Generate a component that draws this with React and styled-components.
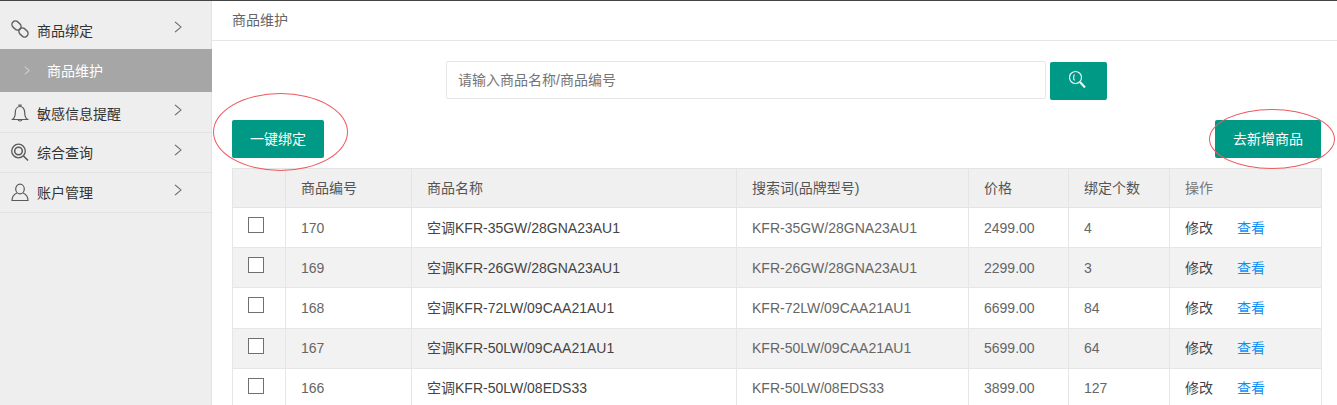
import React from "react";
import styled, { createGlobalStyle } from "styled-components";

const GlobalStyle = createGlobalStyle`
  html, body { margin: 0; padding: 0; height: 100%; overflow: hidden; background: #fff; }
  body { font-family: "Liberation Sans", "Noto Sans CJK SC", sans-serif; font-size: 14px; color: #333; }
  * { box-sizing: border-box; }
`;

const products = [
  { id: 170, name: "KFR-35GW/28GNA23AU1", price: "2499.00", count: 4 },
  { id: 169, name: "KFR-26GW/28GNA23AU1", price: "2299.00", count: 3 },
  { id: 168, name: "KFR-72LW/09CAA21AU1", price: "6699.00", count: 84 },
  { id: 167, name: "KFR-50LW/09CAA21AU1", price: "5699.00", count: 64 },
  { id: 166, name: "KFR-50LW/08EDS33", price: "3899.00", count: 127 },
];

const LinkIcon = () => (
  <svg width="20" height="20" viewBox="0 0 20 20" fill="none" stroke="#5a5a5a" strokeWidth="1.4">
    <rect x="0.500" y="3" width="10" height="7" rx="3.500" transform="rotate(45 5.500 6.500)" />
    <rect x="7.500" y="10" width="10" height="7" rx="3.500" transform="rotate(45 12.500 13.500)" />
  </svg>
);

const BellIcon = () => (
  <svg width="20" height="20" viewBox="0 0 20 20" fill="none" stroke="#5a5a5a" strokeWidth="1.2">
    <path d="M1.500 16.500c2-1.500 2.800-3 2.800-7 0-3.800 2.200-6 4.700-6s4.700 2.200 4.700 6c0 4 .8 5.500 2.800 7z" />
    <path d="M8 3.500V2h2v1.500" />
    <path d="M7 16.500c.3 2 3.700 2 4 0" />
  </svg>
);

const QueryIcon = () => (
  <svg width="20" height="20" viewBox="0 0 20 20" fill="none" stroke="#5a5a5a" strokeWidth="1.3">
    <circle cx="7.500" cy="8" r="6.800" />
    <circle cx="7.500" cy="8" r="3.800" strokeWidth="1.500" />
    <path d="M12.500 13l4.500 4.500" strokeWidth="1.600" />
  </svg>
);

const UserIcon = () => (
  <svg width="20" height="20" viewBox="0 0 20 20" fill="none" stroke="#5a5a5a" strokeWidth="1.2">
    <ellipse cx="9" cy="6" rx="4.300" ry="4.800" />
    <path d="M5.800 10C2.800 11.500 1 13.500 1 17.500h16c0-4-1.800-6-4.800-7.500" />
  </svg>
);

const SearchIcon = () => (
  <svg width="20" height="20" viewBox="0 0 20 20" fill="none" stroke="#e8f6f3" strokeWidth="1.2">
    <circle cx="6.500" cy="7.500" r="6" />
    <path d="M5.500 4.500C4.300 6 4.300 9 5.500 10.500" />
    <path d="M11 12l5 5.500" strokeWidth="2.200" />
  </svg>
);

const Chevron = ({ width = 8, height = 12, color = "#666" }) => (
  <svg width={width} height={height} viewBox="0 0 8 14" fill="none" stroke={color} strokeWidth="1.100" preserveAspectRatio="none">
    <path d="M1 1l6 6-6 6" />
  </svg>
);

const Page = styled.div`
  display: flex;
  height: 405px;
  overflow: hidden;
  border-top: 1px solid #444;
  position: relative;
`;

const Sidebar = styled.aside`
  width: 212px;
  flex: none;
  padding-top: 9px;
  background: #eee;
  border-right: 1px solid #e2e2e2;
`;

const MenuItem = styled.div`
  display: flex;
  align-items: center;
  height: ${(p) => p.$height || 40}px;
  padding: 0 29px 0 11px;
  border-bottom: 1px solid ${(p) => (p.$plain ? "transparent" : "#e3e3e3")};
  color: #333;
`;

const MenuIcon = styled.span`
  display: flex;
  width: 26px;
  flex: none;
`;

const MenuLabel = styled.span`
  flex: 1;
  line-height: 20px;
  padding-top: ${(p) => p.$drop}px;
`;

const MenuArrow = styled.span`
  display: flex;
  margin-bottom: 5px;
`;

const SubItem = styled.div`
  display: flex;
  align-items: center;
  gap: 17px;
  height: 43px;
  margin-right: -1px;
  padding: 0 0 0 24px;
  margin-bottom: 1px;
  line-height: 20px;
  background: #a6a6a6;
  color: #fff;
`;

const Main = styled.main`
  flex: 1;
  min-width: 0;
`;

const Crumb = styled.div`
  height: 40px;
  padding: 0 20px;
  line-height: 38px;
  color: #666;
  border-bottom: 1px solid #e6e6e6;
`;

const SearchRow = styled.div`
  display: flex;
  justify-content: center;
  gap: 4px;
  padding: 20px 230px 0 234px;
`;

const SearchInput = styled.input`
  flex: 1;
  height: 38px;
  padding: 0 11px;
  font: inherit;
  color: #333;
  background: #fff;
  border: 1px solid #e6e6e6;
  border-radius: 2px;
  outline: none;
  &::placeholder { color: #757575; opacity: 1; }
`;

const Button = styled.button`
  display: flex;
  align-items: center;
  justify-content: center;
  width: ${(p) => p.$width}px;
  height: 38px;
  padding: 0 0 2px;
  font: inherit;
  color: #fff;
  background: #009985;
  border: none;
  border-radius: 2px;
`;

const SearchButton = styled(Button)`
  margin-top: 1px;
`;

const ActionRow = styled.div`
  display: flex;
  justify-content: space-between;
  margin: 20px 16px 10px 20px;
`;

const Table = styled.table`
  width: 1089px;
  margin-left: 20px;
  table-layout: fixed;
  border-collapse: collapse;
`;

const HeadCell = styled.th`
  height: 39px;
  padding: 0 15px;
  font-weight: 400;
  line-height: 20px;
  text-align: left;
  color: ${(p) => (p.$muted ? "#777" : "#555")};
  background: #f0f0f0;
  border: 1px solid #e4e4e4;
`;

const Row = styled.tr`
  background: ${(p) => (p.$even ? "#f2f2f2" : "#fff")};
`;

const Cell = styled.td`
  height: 40.200px;
  padding: 0 15px;
  line-height: 20px;
  color: ${(p) => (p.$dark ? "#444" : "#666")};
  border: 1px solid #e6e6e6;
`;

const CheckCell = styled(Cell)`
  padding: 0 0 5px 15px;
`;

const CheckBox = styled.span`
  display: block;
  width: 16px;
  height: 16px;
  background: #fff;
  border: 1px solid #707070;
`;

const Edit = styled.span`
  color: #444;
`;

const View = styled.span`
  margin-left: 24px;
  color: #0d90f5;
`;

const Ring = styled.div`
  position: absolute;
  top: ${(p) => p.$top}px;
  left: ${(p) => p.$left}px;
  width: ${(p) => p.$width}px;
  height: ${(p) => p.$height}px;
  border: 1px solid #ee5a62;
  border-radius: 50%;
  pointer-events: none;
`;

const columns = [53, 126, 325, 232, 100, 101, 152];

export default function App() {
  return (
    <Page>
      <GlobalStyle />
      <Sidebar>
        <MenuItem $height={39} $plain>
          <MenuIcon><LinkIcon /></MenuIcon>
          <MenuLabel $drop={3}>商品绑定</MenuLabel>
          <MenuArrow><Chevron /></MenuArrow>
        </MenuItem>
        <SubItem>
          <Chevron width={6} height={9} color="#eee" />
          <span>商品维护</span>
        </SubItem>
        <MenuItem>
          <MenuIcon><BellIcon /></MenuIcon>
          <MenuLabel $drop={2}>敏感信息提醒</MenuLabel>
          <MenuArrow><Chevron /></MenuArrow>
        </MenuItem>
        <MenuItem>
          <MenuIcon><QueryIcon /></MenuIcon>
          <MenuLabel $drop={0}>综合查询</MenuLabel>
          <MenuArrow><Chevron /></MenuArrow>
        </MenuItem>
        <MenuItem>
          <MenuIcon><UserIcon /></MenuIcon>
          <MenuLabel $drop={0}>账户管理</MenuLabel>
          <MenuArrow><Chevron /></MenuArrow>
        </MenuItem>
      </Sidebar>
      <Main>
        <Crumb>商品维护</Crumb>
        <SearchRow>
          <SearchInput placeholder="请输入商品名称/商品编号" />
          <SearchButton $width={57}><SearchIcon /></SearchButton>
        </SearchRow>
        <ActionRow>
          <Button $width={92}>一键绑定</Button>
          <Button $width={106}>去新增商品</Button>
        </ActionRow>
        <Table>
          <colgroup>
            {columns.map((w, i) => <col key={i} width={w} />)}
          </colgroup>
          <thead>
            <tr>
              <HeadCell />
              <HeadCell>商品编号</HeadCell>
              <HeadCell>商品名称</HeadCell>
              <HeadCell>搜索词(品牌型号)</HeadCell>
              <HeadCell>价格</HeadCell>
              <HeadCell>绑定个数</HeadCell>
              <HeadCell $muted>操作</HeadCell>
            </tr>
          </thead>
          <tbody>
            {products.map((p, i) => (
              <Row key={p.id} $even={i % 2 === 1}>
                <CheckCell><CheckBox /></CheckCell>
                <Cell>{p.id}</Cell>
                <Cell $dark>空调{p.name}</Cell>
                <Cell>{p.name}</Cell>
                <Cell>{p.price}</Cell>
                <Cell>{p.count}</Cell>
                <Cell><Edit>修改</Edit><View>查看</View></Cell>
              </Row>
            ))}
          </tbody>
        </Table>
      </Main>
      <Ring $left={213} $top={92} $width={135} $height={78} />
      <Ring $left={1209} $top={108} $width={126} $height={60} />
    </Page>
  );
}
